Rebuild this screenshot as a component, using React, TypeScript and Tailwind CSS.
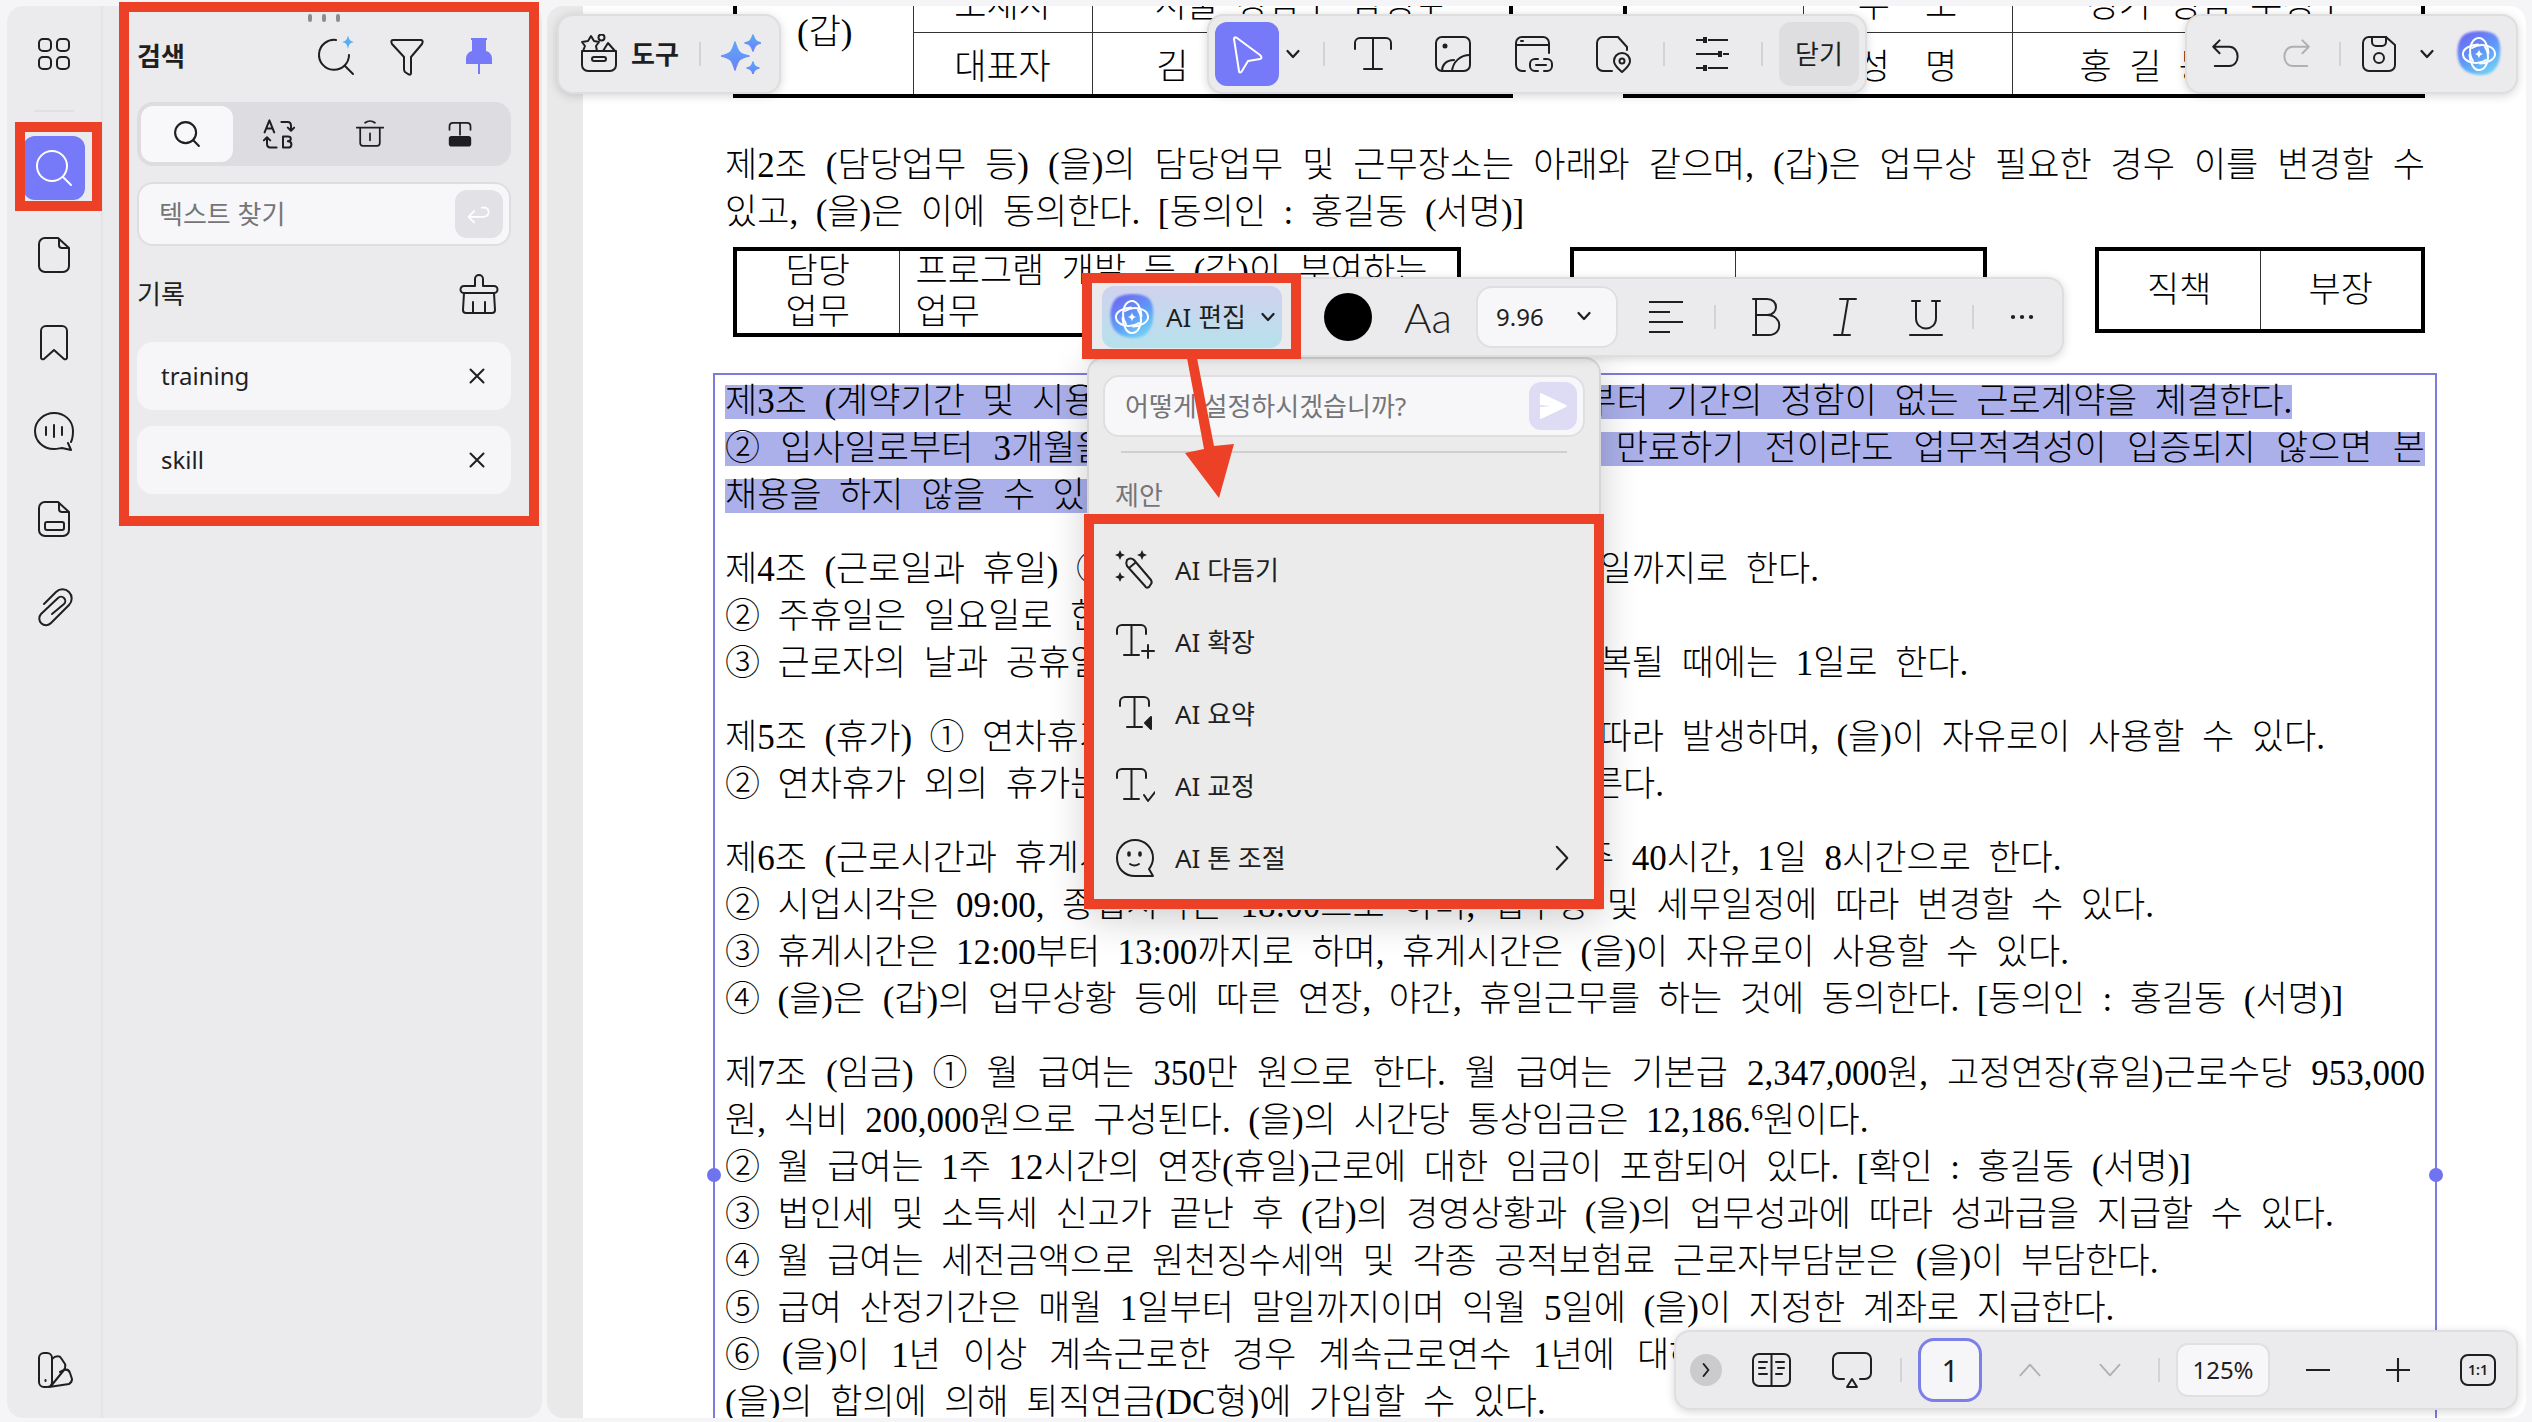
import type { ReactNode } from 'react';

const uiFont = "font-['Noto_Sans','Noto_Sans_CJK_KR',sans-serif]";
const docFont = "font-['Liberation_Serif','Noto_Sans_CJK_KR',serif]";

// The contract sets its words half an em apart.
const spaced = (text: string) => text.replace(/ /g, '\u2002');

type DocLine = { text: string; full?: boolean; sup?: string; rest?: string };

const article3: DocLine[] = [
  { text: '제3조 (계약기간 및 시용기간) ① (을)은 2024년 3월 1일부터 기간의 정함이 없는 근로계약을 체결한다.' },
  { text: '② 입사일로부터 3개월을 시용기간으로 하고, 시용기간이 만료하기 전이라도 업무적격성이 입증되지 않으면 본', full: true },
  { text: '채용을 하지 않을 수 있다.' },
];

const articles: DocLine[][] = [
  [
    { text: '제4조 (근로일과 휴일) ① 근무일은 매주 월요일부터 금요일까지로 한다.' },
    { text: '② 주휴일은 일요일로 한다.' },
    { text: '③ 근로자의 날과 공휴일은 유급휴일로 하며, 주휴일과 중복될 때에는 1일로 한다.' },
  ],
  [
    { text: '제5조 (휴가) ① 연차휴가는 근로기준법에서 정하는 바에 따라 발생하며, (을)이 자유로이 사용할 수 있다.' },
    { text: '② 연차휴가 외의 휴가는 근로기준법령 및 취업규칙에 따른다.' },
  ],
  [
    { text: '제6조 (근로시간과 휴게시간) ① 근로시간은 원칙적으로 주 40시간, 1일 8시간으로 한다.' },
    { text: '② 시업시각은 09:00, 종업시각은 18:00으로 하며, 업무량 및 세무일정에 따라 변경할 수 있다.' },
    { text: '③ 휴게시간은 12:00부터 13:00까지로 하며, 휴게시간은 (을)이 자유로이 사용할 수 있다.' },
    { text: '④ (을)은 (갑)의 업무상황 등에 따른 연장, 야간, 휴일근무를 하는 것에 동의한다. [동의인 : 홍길동 (서명)]' },
  ],
  [
    { text: '제7조 (임금) ① 월 급여는 350만 원으로 한다. 월 급여는 기본급 2,347,000원, 고정연장(휴일)근로수당 953,000', full: true },
    { text: '원, 식비 200,000원으로 구성된다. (을)의 시간당 통상임금은 12,186.', sup: '6', rest: '원이다.' },
    { text: '② 월 급여는 1주 12시간의 연장(휴일)근로에 대한 임금이 포함되어 있다. [확인 : 홍길동 (서명)]' },
    { text: '③ 법인세 및 소득세 신고가 끝난 후 (갑)의 경영상황과 (을)의 업무성과에 따라 성과급을 지급할 수 있다.' },
    { text: '④ 월 급여는 세전금액으로 원천징수세액 및 각종 공적보험료 근로자부담분은 (을)이 부담한다.' },
    { text: '⑤ 급여 산정기간은 매월 1일부터 말일까지이며 익월 5일에 (을)이 지정한 계좌로 지급한다.' },
    { text: '⑥ (을)이 1년 이상 계속근로한 경우 계속근로연수 1년에 대하여 30일분 이상의 평균임금을 퇴직금으로 하며', full: true },
    { text: '(을)의 합의에 의해 퇴직연금(DC형)에 가입할 수 있다.' },
  ],
];

function Icon({ children, className = 'size-10' }: { children: ReactNode; className?: string }) {
  return (
    <svg
      viewBox="0 0 40 40"
      className={`${className} shrink-0`}
      fill="none"
      stroke="currentColor"
      strokeWidth="2"
      strokeLinecap="round"
      strokeLinejoin="round"
      aria-hidden="true"
    >
      {children}
    </svg>
  );
}

function Chevron({ className = 'size-5' }: { className?: string }) {
  return (
    <Icon className={className}>
      <path d="M9 14l11 12 11-12" strokeWidth="4.5" />
    </Icon>
  );
}

function Divider({ className = '' }: { className?: string }) {
  return <span className={`w-0.5 h-6 bg-[#d3d3d6] shrink-0 ${className}`} />;
}

function IconButton({ label, className = 'w-20', children }: { label: string; className?: string; children: ReactNode }) {
  return (
    <button type="button" aria-label={label} className={`flex h-16 shrink-0 items-center justify-center ${className}`}>
      {children}
    </button>
  );
}

function AiLogo({ id }: { id: string }) {
  return (
    <svg viewBox="0 0 48 48" className="size-12 shrink-0" fill="none" aria-hidden="true">
      <defs>
        <linearGradient id={id} x1="0.2" y1="0" x2="0.8" y2="1">
          <stop offset="0.1" stopColor="#6a70f3" />
          <stop offset="0.55" stopColor="#5e9df8" />
          <stop offset="1" stopColor="#74d8f5" />
        </linearGradient>
        <filter id={`${id}-soft`}>
          <feGaussianBlur stdDeviation="1" />
        </filter>
      </defs>
      <path
        d="M10 4C18 0 32 0 39 4c6 4 7 13 6 22-1 10-7 19-18 19C16 45 7 41 4 32 1 23 2 9 10 4z"
        fill={`url(#${id})`}
        filter={`url(#${id}-soft)`}
      />
      <g stroke="#fff" strokeWidth="2" strokeLinecap="round">
        {[0, 90, 180, 270].map((angle) => (
          <path key={angle} transform={`rotate(${angle} 24 24)`} d="M18 31C12 22 16 9 23 8c6-1 10 7 10.500 15" />
        ))}
      </g>
      <path d="M24 19.500c.8 3 1.500 3.700 4.500 4.500-3 .8-3.700 1.500-4.500 4.500-.8-3-1.500-3.700-4.500-4.500 3-.8 3.700-1.500 4.500-4.500z" fill="#fff" />
    </svg>
  );
}

function Magnifier({ className, strokeWidth = 2 }: { className?: string; strokeWidth?: number }) {
  return (
    <Icon className={className}>
      <g strokeWidth={strokeWidth}>
        <circle cx="18" cy="18" r="15" />
        <path d="M29 29l8 8" />
      </g>
    </Icon>
  );
}

function Rail() {
  return (
    <nav className="flex w-24 shrink-0 flex-col items-center gap-12 border-r-2 border-[#e4e4e7] pt-7 pb-7 text-[#1f1f21]">
      <button type="button" aria-label="모두 보기" className="mb-[22px] border-b-2 border-[#e1e1e4] pb-9">
        <Icon>
          <rect x="5" y="5" width="12" height="12" rx="4" />
          <rect x="23" y="5" width="12" height="12" rx="4" />
          <rect x="5" y="23" width="12" height="12" rx="4" />
          <rect x="23" y="23" width="12" height="12" rx="4" />
        </Icon>
      </button>
      <button type="button" aria-label="검색" className="-my-[46px] flex h-16 w-[62px] items-center justify-center rounded-xl bg-[#767af8] text-white">
        <Magnifier />
      </button>
      <button type="button" aria-label="페이지" className="mt-[33px]">
        <Icon>
          <path d="M11 3h13l11 10v18a6 6 0 0 1-6 6H11a6 6 0 0 1-6-6V9a6 6 0 0 1 6-6z" />
          <path d="M25 4v6a3 3 0 0 0 3 3h6" />
        </Icon>
      </button>
      <button type="button" aria-label="책갈피">
        <Icon>
          <path d="M12 3h16a5 5 0 0 1 5 5v27a2 2 0 0 1-3 1L20 27 10 36a2 2 0 0 1-3-1V8a5 5 0 0 1 5-5z" />
        </Icon>
      </button>
      <button type="button" aria-label="댓글">
        <Icon>
          <path d="M37 31c1-2 2-6 2-11C39 9 30 2 20 2S1 10 1 20s8 18 19 18c4 0 6-1 8-1l9 2-3-7" />
          <path d="M12 16v8M20 14v12M28 16v8" />
        </Icon>
      </button>
      <button type="button" aria-label="양식">
        <Icon>
          <path d="M11 3h13l11 10v18a6 6 0 0 1-6 6H11a6 6 0 0 1-6-6V9a6 6 0 0 1 6-6z" />
          <path d="M25 4v6a3 3 0 0 0 3 3h6" />
          <rect x="11" y="23" width="19" height="8" rx="2" />
        </Icon>
      </button>
      <button type="button" aria-label="첨부 파일">
        <Icon>
          <path d="M10 17L22 5a9 9 0 0 1 13 13L17 36a6.500 6.500 0 0 1-10-9L24 11a4 4 0 0 1 6 6L18 27" />
        </Icon>
      </button>
      <button type="button" aria-label="테마" className="mt-auto">
        <Icon>
          <rect x="5" y="3" width="13" height="34" rx="5" />
          <path d="M18 9c4-4 8-3 9-1l4 6c1 2 0 4-1 6L17 36M26 22l4-2c3-1 5 0 6 3l2 6c0 3-1 4-3 5l-20 3" />
          <path d="M11.500 30v1" />
        </Icon>
      </button>
    </nav>
  );
}

function HistoryItem({ term }: { term: string }) {
  return (
    <li className="flex h-[68px] items-center justify-between rounded-2xl bg-[#f6f5f8] px-6">
      <span className="text-2xl text-[#1f1f21]">{term}</span>
      <button type="button" aria-label={`${term} 삭제`}>
        <Icon className="size-5">
          <path d="M7 7l26 26M33 7L7 33" strokeWidth="4" />
        </Icon>
      </button>
    </li>
  );
}

function SearchPanel() {
  return (
    <section className="relative flex min-w-0 flex-1 flex-col pl-[34px] pr-[31px] pt-7 text-[#1f1f21]">
      <span className="absolute left-[205px] top-2 flex gap-[10px]">
        <i className="h-2 w-1 rounded-full bg-[#8d8d90]" />
        <i className="h-2 w-1 rounded-full bg-[#8d8d90]" />
        <i className="h-2 w-1 rounded-full bg-[#8d8d90]" />
      </span>
      <header className="flex h-11 items-center justify-between">
        <h1 className="text-[26px] font-bold">검색</h1>
        <div className="flex gap-8 pr-3">
          <button type="button" aria-label="AI 검색">
            <Icon>
              <path d="M21 4a15 15 0 1 0 13 15M30 30l8 8" />
              <path d="M33-1c1 5 2 6 6 7-4 1-5 2-6 7-1-5-2-6-6-7 4-1 5-2 6-7z" fill="#57aef5" stroke="none" />
            </Icon>
          </button>
          <button type="button" aria-label="필터">
            <Icon>
              <path d="M6 4h28c2 0 2 2 1 4L24 21v16c0 2-1 2-3 1l-3-2c-1-1-1-1-1-3V21L5 8C4 6 4 4 6 4z" />
            </Icon>
          </button>
          <button type="button" aria-label="고정" className="text-[#767af8]">
            <Icon>
              <path d="M13 3h14v12c4 1 6 4 6 8v5H7v-5c0-4 2-7 6-8z" fill="currentColor" stroke="none" />
              <path d="M12 3h16M20 28v10" strokeLinecap="butt" />
            </Icon>
          </button>
        </div>
      </header>
      <div className="mt-6 flex h-16 rounded-2xl bg-[#dddce0] p-1 pr-0">
        <button type="button" aria-label="찾기" className="flex w-[92px] shrink-0 items-center justify-center rounded-xl bg-[#f8f8fa]">
          <Magnifier className="size-7" strokeWidth={3} />
        </button>
        <IconButton label="바꾸기" className="-mt-1 w-[92px]">
          <Icon className="size-8">
            <path d="M2 18L8 3l6 15M4 13h8M23 5h8c3 0 4 2 4 5v5M31 12l4 4 4-4M17 37h-8c-3 0-4-2-4-5v-6M1 28l4-4 4 4M25 23h6c5 0 5 6 0 6 6 0 6 8 0 8h-6z" strokeWidth="2.500" />
          </Icon>
        </IconButton>
        <IconButton label="삭제" className="-mt-1 w-[90px]">
          <Icon className="size-7">
            <path d="M1 11h38M6 11v22a4 4 0 0 0 4 4h20a4 4 0 0 0 4-4V11M13 4c4-3 10-3 14 0M20 19v10" strokeWidth="2.500" />
          </Icon>
        </IconButton>
        <IconButton label="가리기" className="-mt-1 w-[90px]">
          <Icon className="size-7">
            <path d="M5 14V9c0-3 2-5 5-5h20c3 0 5 2 5 5v5M20 4v17" strokeWidth="2.500" />
            <rect x="5" y="24" width="30" height="13" rx="3" fill="currentColor" />
          </Icon>
        </IconButton>
      </div>
      <div className="mt-4 flex h-16 items-center rounded-2xl border-2 border-[#dedee1] bg-[#f7f7f9] pl-5 pr-1.5">
        <input type="text" aria-label="텍스트 찾기" placeholder="텍스트 찾기" className="min-w-0 flex-1 bg-transparent text-[26px] outline-none placeholder:text-[#757578]" />
        <button type="submit" aria-label="입력" className="flex size-12 items-center justify-center rounded-xl bg-[#e2e1e5] text-white">
          <Icon className="size-7">
            <path d="M13 16l-8 8 8 8M5 24h21c10 0 10-13 2-13h-4" strokeWidth="2.500" />
          </Icon>
        </button>
      </div>
      <div className="mt-6 flex h-12 items-center justify-between pr-3">
        <h2 className="text-[26px]">기록</h2>
        <button type="button" aria-label="기록 지우기">
          <Icon>
            <path d="M16 12V5a4 4 0 0 1 8 0v7h11a3.500 3.500 0 0 1 0 7H5a3.500 3.500 0 0 1 0-7zM5 19L4 36a3 3 0 0 0 3 3h26a3 3 0 0 0 3-3l-1-17M14 28v11M26 28v11" />
          </Icon>
        </button>
      </div>
      <ul className="mt-6 flex flex-col gap-4">
        <HistoryItem term="training" />
        <HistoryItem term="skill" />
      </ul>
    </section>
  );
}

function Line({ line }: { line: DocLine }) {
  if (line.full) {
    return (
      <p className="flex justify-between whitespace-nowrap">
        {line.text.split(' ').map((word, i) => (
          <span key={i}>{word} </span>
        ))}
      </p>
    );
  }
  return (
    <p className="whitespace-nowrap">
      {spaced(line.text)}
      {line.sup && <sup className="text-2xl leading-none">{line.sup}</sup>}
      {line.rest}
    </p>
  );
}

function Parties() {
  const cell = 'border border-[#333] p-0 text-center align-bottom leading-[52px]';
  const head = 'border border-[#333] p-0 text-center';
  return (
    <div className="-mt-10 ml-2 flex justify-between whitespace-nowrap">
      <table className="w-[780px] table-fixed border-collapse border-4 border-black">
        <tbody>
          <tr className="h-16">
            <td rowSpan={2} className={`${head} w-[178px]`}>(갑)</td>
            <td className={`${cell} w-[179px]`}>소재지</td>
            <td className={cell}>{spaced('서울 강남구 삼성로')}</td>
          </tr>
          <tr className="h-16">
            <td className={cell}>대표자</td>
            <td className={cell}>{spaced('김      대     표')}</td>
          </tr>
        </tbody>
      </table>
      <table className="w-[802px] table-fixed border-collapse border-4 border-black">
        <tbody>
          <tr className="h-16">
            <td rowSpan={2} className={`${head} w-[178px]`}>(을)</td>
            <td className={`${cell} w-[209px]`}>{spaced('주  소')}</td>
            <td className={cell}>{spaced('경기 성남 수정구')}</td>
          </tr>
          <tr className="h-16">
            <td className={cell}>{spaced('성  명')}</td>
            <td className={cell}>{spaced('홍 길 동     (인)')}</td>
          </tr>
        </tbody>
      </table>
    </div>
  );
}

function Duties() {
  const cell = 'border border-[#333] p-0 text-center';
  return (
    <div className="ml-2 mt-[11px] flex h-[86px] justify-between whitespace-nowrap leading-[41px]">
      <table className="w-[728px] table-fixed border-collapse border-4 border-black">
        <tbody>
          <tr>
            <td className={`${cell} w-[164px]`}>담당<br />업무</td>
            <td className="border border-[#333] py-0 pl-4 text-left">{spaced('프로그램 개발 등 (갑)이 부여하는')}<br />업무</td>
          </tr>
        </tbody>
      </table>
      <table className="w-[417px] table-fixed border-collapse border-4 border-black">
        <tbody>
          <tr>
            <td className={`${cell} w-[164px]`} />
            <td className={cell} />
          </tr>
        </tbody>
      </table>
      <table className="w-[330px] table-fixed border-collapse border-4 border-black">
        <tbody>
          <tr>
            <td className={cell}>직책</td>
            <td className={cell}>부장</td>
          </tr>
        </tbody>
      </table>
    </div>
  );
}

function ContractPage() {
  return (
    <article className={`ml-9 h-full overflow-hidden bg-white pl-[142px] pr-[101px] text-[35px] font-light leading-[47px] text-black ${docFont}`}>
      <Parties />
      <div className="mt-11">
        <Line line={{ text: '제2조 (담당업무 등) (을)의 담당업무 및 근무장소는 아래와 같으며, (갑)은 업무상 필요한 경우 이를 변경할 수', full: true }} />
        <Line line={{ text: '있고, (을)은 이에 동의한다. [동의인 : 홍길동 (서명)]' }} />
      </div>
      <Duties />
      <div className="relative -mx-3 mt-10 flex flex-col gap-[27px] border-x-2 border-t-2 border-[#7b7ddc] px-2.5 pt-2.5">
        <div className="flex flex-col items-start gap-[13px] pb-1.5 leading-[34px] [&>*]:h-[34px] [&>*]:bg-[#abb0ea]">
          {article3.map((line) => (
            <div key={line.text} className={line.full ? 'w-full' : ''}>
              <Line line={line} />
            </div>
          ))}
        </div>
        {articles.map((lines) => (
          <div key={lines[0].text}>
            {lines.map((line) => (
              <Line key={line.text} line={line} />
            ))}
          </div>
        ))}
        <i className="absolute -left-2 top-[793px] size-3.5 rounded-full bg-[#6f73f0]" />
        <i className="absolute -right-2 top-[793px] size-3.5 rounded-full bg-[#6f73f0]" />
      </div>
    </article>
  );
}

const bar = 'absolute flex h-20 items-center rounded-2xl border-2 border-[#dededf] bg-[#ebeaec] shadow-[0_2px_10px_rgba(0,0,0,0.16)] text-[#1f1f21]';

function ToolsBar() {
  return (
    <div className={`${bar} left-2.5 top-2 w-[224px] pl-5`}>
      <button type="button" className="flex items-center gap-3 text-[26px] font-bold">
        <Icon>
          <path d="M3 17h34v14a6 6 0 0 1-6 6H9a6 6 0 0 1-6-6zM4 17l2-5-3-4 6-1 3-5 3 5 5 1-3 4 1 5M24 17l5-8 7 8" />
          <circle cx="22.500" cy="3.500" r="3" />
          <rect x="13" y="23" width="14" height="4" rx="2" />
        </Icon>
        도구
      </button>
      <Divider className="mx-5" />
      <button type="button" aria-label="AI 도구">
        <svg viewBox="0 0 40 40" className="size-10" aria-hidden="true">
          <defs>
            <linearGradient id="sparkle" x1="0" y1="0" x2="0" y2="1">
              <stop offset="0" stopColor="#5aa8f8" />
              <stop offset="1" stopColor="#6d82f5" />
            </linearGradient>
          </defs>
          <g fill="url(#sparkle)" stroke="url(#sparkle)" strokeWidth="1.500" strokeLinejoin="round">
            <path d="M14 8c3 10 4 12 14 14-10 2-11 4-14 14-3-10-4-12-14-14 10-2 11-4 14-14z" />
            <path d="M32 1c2 6 3 7 8 8-5 1-6 2-8 8-2-6-3-7-8-8 5-1 6-2 8-8z" />
            <path d="M32 28c1 4 2 5 6 6-4 1-5 2-6 6-1-4-2-5-6-6 4-1 5-2 6-6z" />
          </g>
        </svg>
      </button>
    </div>
  );
}

function EditBar() {
  return (
    <div className={`${bar} left-[660px] top-2 px-1.5`}>
      <button type="button" aria-label="선택" className="flex size-16 items-center justify-center rounded-xl bg-[#767af8] text-white">
        <Icon>
          <path d="M7 5c0-2 1-2 3-1l23 17c2 2 2 3 0 4l-12 2-6 10c-1 2-3 2-3 0z" />
        </Icon>
      </button>
      <IconButton label="선택 옵션" className="w-7"><Chevron /></IconButton>
      <Divider className="ml-4 mr-2" />
      <IconButton label="텍스트">
        <Icon>
          <path d="M2 15V9a5 5 0 0 1 5-5h26a5 5 0 0 1 5 5v6M20 4v31M11 35h18" />
        </Icon>
      </IconButton>
      <IconButton label="이미지">
        <Icon>
          <rect x="3" y="3" width="34" height="34" rx="6" />
          <circle cx="12" cy="12" r="1.500" fill="currentColor" />
          <path d="M9 37c0-6 4-11 12-11M19 37c1-9 8-16 18-16" />
        </Icon>
      </IconButton>
      <IconButton label="링크">
        <Icon>
          <path d="M12 37H9a6 6 0 0 1-6-6V9a6 6 0 0 1 6-6h21a6 6 0 0 1 6 6v10M3 11h33M8 7h2" />
          <path d="M25 25h-3a5 5 0 0 0-5 5v2a5 5 0 0 0 5 5h3M31 25h3a5 5 0 0 1 5 5v2a5 5 0 0 1-5 5h-3M23 31h10" />
        </Icon>
      </IconButton>
      <IconButton label="위치">
        <Icon>
          <path d="M19 37h-9a6 6 0 0 1-6-6V9a6 6 0 0 1 6-6h15l9 10v3" />
          <path d="M29 19c-5 0-8 4-8 8 0 5 4 7 8 11 4-4 8-6 8-11 0-4-3-8-8-8z" />
          <circle cx="29" cy="27" r="2.500" />
        </Icon>
      </IconButton>
      <Divider className="ml-2.5 mr-2" />
      <IconButton label="정렬">
        <Icon>
          <path d="M3 6h7M15 6h20M3 20h22M30 20h6M3 34h7M15 34h20" strokeLinecap="butt" />
          <path d="M12 3v6M27 17v6M12 31v6" strokeWidth="4" strokeLinecap="butt" />
        </Icon>
      </IconButton>
      <Divider className="ml-2 mr-4" />
      <button type="button" className="h-16 w-20 rounded-xl bg-[#dedee0] text-[26px]">닫기</button>
    </div>
  );
}

function FileBar() {
  return (
    <div className={`${bar} right-2 top-2 w-[333px] pl-1`}>
      <IconButton label="실행 취소" className="w-[70px]">
        <Icon className="size-8">
          <path d="M12 3l-8 8 8 8M4 11h20c14 0 14 24 0 24H6" strokeWidth="2.500" />
        </Icon>
      </IconButton>
      <IconButton label="다시 실행" className="w-[70px] text-[#b0b0b3]">
        <Icon className="size-8">
          <path d="M28 3l8 8-8 8M36 11H16C2 11 2 35 16 35h18" strokeWidth="2.500" />
        </Icon>
      </IconButton>
      <Divider className="ml-2" />
      <IconButton label="저장" className="w-[76px]">
        <Icon>
          <path d="M10 3h17l9 8v20a6 6 0 0 1-6 6H10a6 6 0 0 1-6-6V9a6 6 0 0 1 6-6z" />
          <path d="M13 3v5a4 4 0 0 0 4 4h6a4 4 0 0 0 4-4V3" />
          <circle cx="20" cy="24" r="5" />
        </Icon>
      </IconButton>
      <IconButton label="저장 옵션" className="w-5"><Chevron /></IconButton>
      <IconButton label="AI 도우미" className="w-[84px]"><AiLogo id="logo-top" /></IconButton>
    </div>
  );
}

function FormatBar() {
  return (
    <div className={`${bar} left-[540px] top-[271px] rounded-l-none pl-[13px] pr-2`}>
      <button type="button" className="flex h-[62px] w-[180px] items-center rounded-xl bg-linear-to-b from-[#d0d2ee] to-[#b6e1ec] pl-1.5 text-[26px]">
        <AiLogo id="logo-edit" />
        <span className="ml-2.5 flex-1 whitespace-nowrap text-left">AI 편집</span>
        <Chevron className="mr-1 size-5" />
      </button>
      <button type="button" aria-label="글자 색" className="ml-[42px] size-12 rounded-full bg-black" />
      <button type="button" className="ml-4 w-20 font-['Lato','Noto_Sans',sans-serif] text-[42px] font-light">Aa</button>
      <div className="relative ml-2 h-[62px] w-[142px]">
        <select aria-label="글자 크기" defaultValue="9.96" className="h-full w-full appearance-none rounded-2xl border-2 border-[#dfdfe2] bg-[#f7f7f9] pl-[18px] text-2xl">
          <option>9.96</option>
        </select>
        <span className="pointer-events-none absolute right-6 top-5"><Chevron /></span>
      </div>
      <IconButton label="맞춤" className="w-24">
        <Icon>
          <path d="M3 5h34M3 15h21M3 25h34M3 35h21" strokeLinecap="butt" />
        </Icon>
      </IconButton>
      <Divider className="mr-2.5" />
      <IconButton label="굵게">
        <Icon>
          <path d="M7 2h14c12 0 12 16 0 16H10M10 2v36M7 38h16c14 0 14-20-2-20" />
        </Icon>
      </IconButton>
      <IconButton label="기울임꼴">
        <Icon>
          <path d="M14 2h16M22 2l-6 36M8 38h16" />
        </Icon>
      </IconButton>
      <IconButton label="밑줄">
        <Icon>
          <path d="M6 4h8M26 4h8M10 4v17c0 14 20 14 20 0V4M4 38h32" />
        </Icon>
      </IconButton>
      <Divider className="ml-1.5 mr-4" />
      <IconButton label="더 보기" className="w-16">
        <Icon className="size-6">
          <path d="M5 20h.1M20 20h.1M35 20h.1" strokeWidth="7" />
        </Icon>
      </IconButton>
    </div>
  );
}

const letterT = 'M2 12V8a5 5 0 0 1 5-5h19a5 5 0 0 1 5 5v4M16.500 3v30M9 33h15';

const suggestions = [
  {
    label: 'AI 다듬기',
    icon: (
      <>
        <path d="M12 10c2-2 5-2 7 0l17 20c1 2 1 3 0 4l-2 3c-2 1-3 1-4-1L12 16c-1-2-1-4 0-6zM14 18l6-5" />
        <path d="M5 0l1.500 3.500L10 5 6.500 6.500 5 10 3.500 6.500 0 5l3.500-1.500zM27 0l1.500 3.500L32 5l-3.500 1.500L27 10l-1.500-3.500L22 5l3.500-1.500zM5 22l1.500 3.500L10 27l-3.500 1.500L5 32l-1.500-3.500L0 27l3.500-1.500z" fill="currentColor" stroke="none" />
      </>
    ),
  },
  { label: 'AI 확장', icon: <path d={`${letterT}M27 29h12M33 23v13`} /> },
  {
    label: 'AI 요약',
    icon: (
      <>
        <path transform="translate(3 0)" d={letterT} />
        <path d="M36 23v12l-6-6z" fill="currentColor" />
      </>
    ),
  },
  { label: 'AI 교정', icon: <path d={`${letterT}M29 29l4 6 7-9`} /> },
  {
    label: 'AI 톤 조절',
    icon: (
      <>
        <path d="M20 38C9 38 2 30 2 20S10 2 20 2s18 8 18 18c0 4-1 7-4 11l4 7z" />
        <path d="M14 15v2M25 15v2" strokeWidth="3.500" />
        <path d="M15 26c3 2 6 2 9 0" />
      </>
    ),
  },
];

function AiMenu() {
  return (
    <div className="absolute left-[540px] top-[351px] flex w-[514px] flex-col rounded-t-2xl border-2 border-[#d5d5d7] bg-[#ebebec] pb-3.5 pt-4 text-[26px] text-[#1f1f21] shadow-[0_8px_40px_rgba(0,0,0,0.2)]">
      <div className="mx-3.5 flex h-[62px] items-center rounded-2xl border-2 border-[#dfdfe2] bg-[#f7f7f9] pl-5 pr-1.5">
        <input type="text" aria-label="AI 요청" placeholder="어떻게 설정하시겠습니까?" className="min-w-0 flex-1 bg-transparent outline-none placeholder:text-[#757578]" />
        <button type="submit" aria-label="보내기" className="flex size-12 items-center justify-center rounded-xl bg-[#dedbf5]">
          <svg viewBox="0 0 30 30" className="size-7" aria-hidden="true">
            <path d="M2 1l27 13c1 1 1 1 0 2L2 29c-1 0-1 0-1-1V16l12-1-12-1V2c0-1 0-1 1-1z" fill="#fff" />
          </svg>
        </button>
      </div>
      <hr className="mx-8 mt-3.5 border-t-2 border-[#cfcfd2]" />
      <h3 className="ml-[26px] mt-6 text-[#757578] leading-9">제안</h3>
      <ul className="mt-[21px]">
        {suggestions.map(({ label, icon }) => (
          <li key={label}>
            <button type="button" className="flex h-[72px] w-full items-center pl-[26px] pr-6 text-left">
              <Icon>{icon}</Icon>
              <span className="ml-5 flex-1">{label}</span>
              {label === 'AI 톤 조절' && (
                <Icon className="size-7">
                  <path d="M14 4l15 16-15 16" strokeWidth="3" />
                </Icon>
              )}
            </button>
          </li>
        ))}
      </ul>
    </div>
  );
}

function ViewBar() {
  return (
    <div className={`${bar} bottom-2 right-2 w-[844px] pl-3.5`}>
      <button type="button" aria-label="접기" className="flex size-8 items-center justify-center rounded-full bg-[#cbcbcd]">
        <Icon className="size-4">
          <path d="M14 5l12 15-12 15" strokeWidth="5" />
        </Icon>
      </button>
      <IconButton label="두 페이지 보기" className="ml-2.5 w-20">
        <Icon>
          <rect x="1" y="4" width="37" height="32" rx="6" />
          <path d="M19.500 4v32M7 12h8M7 18h6M7 24h8M24 12h8M26 18h6M24 24h6" />
        </Icon>
      </IconButton>
      <IconButton label="프레젠테이션">
        <Icon>
          <path d="M12 29H7a6 6 0 0 1-6-6V9a6 6 0 0 1 6-6h26a6 6 0 0 1 6 6v14a6 6 0 0 1-6 6h-5M20 29l5 8H15z" />
        </Icon>
      </IconButton>
      <Divider className="ml-2 mr-4" />
      <input type="text" aria-label="페이지 번호" defaultValue="1" className="size-16 rounded-2xl border-3 border-[#7b7fe8] bg-[#f6f5f8] text-center text-3xl outline-none" />
      <IconButton label="이전 페이지" className="ml-2 w-20 text-[#b0b0b3]">
        <Icon className="size-6">
          <path d="M4 29L20 11l16 18" strokeWidth="3" />
        </Icon>
      </IconButton>
      <IconButton label="다음 페이지" className="w-20 text-[#b0b0b3]">
        <Icon className="size-6">
          <path d="M4 11l16 18 16-18" strokeWidth="3" />
        </Icon>
      </IconButton>
      <Divider className="ml-2 mr-4" />
      <button type="button" className="h-[54px] w-[94px] rounded-xl border-2 border-[#e0e0e3] bg-[#f7f7f9] text-2xl">125%</button>
      <IconButton label="축소" className="ml-2 w-20">
        <Icon className="size-6">
          <path d="M1 20h38" strokeWidth="3.500" />
        </Icon>
      </IconButton>
      <IconButton label="확대">
        <Icon className="size-6">
          <path d="M1 20h38M20 1v38" strokeWidth="3.500" />
        </Icon>
      </IconButton>
      <button type="button" className="ml-auto mr-5 h-8 w-9 rounded-lg border-2 border-[#1f1f21] text-sm leading-none font-semibold">1:1</button>
    </div>
  );
}

function Annotations() {
  const frame = 'absolute border-10 border-[#ec4027]';
  return (
    <div className="pointer-events-none absolute inset-0">
      <i className={`${frame} left-[119px] top-[2px] h-[524px] w-[420px]`} />
      <i className={`${frame} left-[15px] top-[122px] h-[89px] w-[87px]`} />
      <i className={`${frame} left-[1082px] top-[273px] h-[86px] w-[219px]`} />
      <i className={`${frame} left-[1084px] top-[514px] h-[395px] w-[520px]`} />
      <svg viewBox="0 0 50 140" className="absolute left-[1185px] top-[358px] h-[140px] w-[50px]" fill="#ec4027" aria-hidden="true">
        <path d="M2 0h10l17 88 20-2-15 54L0 95l19-4z" />
      </svg>
    </div>
  );
}

export default function App() {
  return (
    <div className={`relative flex h-screen gap-[5px] overflow-hidden bg-[#f5f5f7] pb-1 pl-[7px] pr-1.5 pt-1.5 ${uiFont}`}>
      <aside className="flex w-[535px] shrink-0 overflow-hidden rounded-2xl bg-[#ebeaec]">
        <Rail />
        <SearchPanel />
      </aside>
      <main className="relative min-w-0 flex-1 overflow-hidden rounded-2xl bg-[#e8e9e8]">
        <ContractPage />
        <ToolsBar />
        <EditBar />
        <FileBar />
        <AiMenu />
        <FormatBar />
        <ViewBar />
      </main>
      <Annotations />
    </div>
  );
}
